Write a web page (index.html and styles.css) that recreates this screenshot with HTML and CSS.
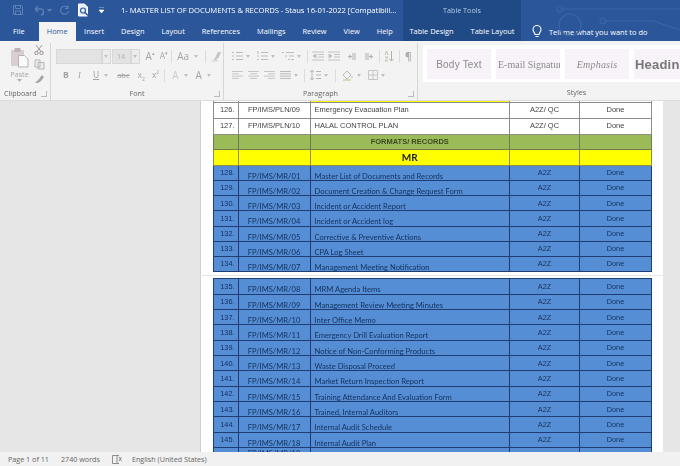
FILE: index.html
```html
<!DOCTYPE html>
<html lang="en">
<head>
<meta charset="utf-8">
<title>Word</title>
<link rel="stylesheet" href="styles.css">
</head>
<body>
<div class="app">
  <header class="titlebar">
    <svg class="decor" width="277" height="41" viewBox="0 0 277 41"><g fill="none" stroke="#3a65a5" stroke-width="1.2"><path d="M157 9H277M200 21H250L277 30"/><circle cx="157" cy="9" r="3"/><circle cx="200" cy="21" r="3"/><circle cx="167" cy="25" r="11"/></g></svg>
    <div class="qat">
      <svg class="q-save" width="12" height="12" viewBox="0 0 12 12"><path d="M1.500 1.500h8l1 1v8h-9zM3.500 1.500v3h5v-3M3.500 10.500v-3.500h5v3.500" fill="none" stroke="#5d80b5"/></svg>
      <svg class="q-undo" width="12" height="12" viewBox="0 0 12 12"><path d="M2 5h5a3 3 0 0 1 1 6M2 5l3-3M2 5l3 3" fill="none" stroke="#5d80b5" stroke-width="1.300"/></svg>
      <svg class="q-caret" width="5" height="3" viewBox="0 0 5 3"><path d="M0 0h5L2.500 3z" fill="#5d80b5"/></svg>
      <svg class="q-redo" width="11" height="11" viewBox="0 0 11 11"><path d="M8.500 2.500A4 4 0 1 0 9.500 6M9 .5v3H6" fill="none" stroke="#5d80b5" stroke-width="1.200"/></svg>
      <svg class="q-prev" width="13" height="14" viewBox="0 0 13 14"><path d="M1.500 1h6l3 3v9h-9z" fill="#e8eef7" stroke="#fff"/><circle cx="6" cy="7.500" r="2.500" fill="none" stroke="#2b579a" stroke-width="1.200"/><path d="M8 9.500l3 3" stroke="#2b579a" stroke-width="1.500"/></svg>
      <svg class="q-more" width="5" height="6" viewBox="0 0 5 6"><path d="M0 0h5M0 3h5L2.500 6z" fill="#fff" stroke="#fff" stroke-width=".6"/></svg>
    </div>
    <div class="doc-title">1- MASTER LIST OF DOCUMENTS &amp; RECORDS - Staus 16-01-2022 [Compatibili...</div>
    <div class="tools-title">Table Tools</div>
  </header>

  <nav class="tabs">
    <span class="tab tab-file">File</span>
    <span class="tab tab-active">Home</span>
    <span class="tab">Insert</span>
    <span class="tab">Design</span>
    <span class="tab">Layout</span>
    <span class="tab">References</span>
    <span class="tab">Mailings</span>
    <span class="tab">Review</span>
    <span class="tab">View</span>
    <span class="tab">Help</span>
    <div class="context-tabs">
      <span class="tab">Table Design</span>
      <span class="tab">Table Layout</span>
    </div>
    <div class="tellme">
      <svg width="10" height="13" viewBox="0 0 10 13"><path d="M3 9.500C3 7.500 1 7 1 4.500a4 4 0 0 1 8 0C9 7 7 7.500 7 9.500zM3.500 11.500h3" fill="none" stroke="#fff" stroke-width="1.100"/></svg>
      <span>Tell me what you want to do</span>
    </div>
  </nav>

  <section class="ribbon">
    <div class="group g-clip">
      <div class="group-body clip-body">
        <div class="paste">
          <svg width="19" height="21" viewBox="0 0 19 21"><rect x="1" y="3" width="13" height="16" fill="#d9cfd0"/><rect x="4.500" y="1" width="6" height="4" fill="#bdb4b5"/><path d="M8.500 8.500h6l3.500 3.500v8h-9.500z" fill="#fafafa" stroke="#b5b5b5"/></svg>
          <span class="paste-label">Paste</span>
          <svg width="5" height="3" viewBox="0 0 5 3"><path d="M0 0h5L2.500 3z" fill="#b0b0b0"/></svg>
        </div>
        <div class="clip-tools">
          <svg width="10" height="11" viewBox="0 0 10 11"><path d="M2 1l5 6.500M8 1L3 7.500" stroke="#9a9a9a"/><circle cx="2.500" cy="9" r="1.700" fill="none" stroke="#9a8f8f"/><circle cx="7.500" cy="9" r="1.700" fill="none" stroke="#9a8f8f"/></svg>
          <svg width="11" height="11" viewBox="0 0 11 11"><path d="M1 1h5v7H1zM4 3.500h6V10H4z" fill="#eee" stroke="#b5b5b5"/></svg>
          <svg width="11" height="10" viewBox="0 0 11 10"><path d="M1 9l4-4 2 2-3 2zM5 5l3-4 2 2-3 4z" fill="#a5a5a5"/></svg>
        </div>
      </div>
      <div class="group-label"><span>Clipboard</span><i class="launcher"></i></div>
    </div>

    <div class="group g-font">
      <div class="group-body">
        <div class="row row-top">
          <span class="box box-name"></span><span class="box box-dd"><b class="caret"></b></span>
          <span class="box box-size">14</span><span class="box box-dd"><b class="caret"></b></span>
          <span class="tool t-grow">A<sup>▴</sup></span>
          <span class="tool t-shrink">A<sup>▾</sup></span>
          <i class="sep s-a"></i>
          <span class="tool t-aa">Aa</span><b class="caret"></b>
          <i class="sep s-b"></i>
          <svg class="t-clear" width="12" height="11" viewBox="0 0 12 11"><path d="M3 9L7 1h3L8 6l-3 3z" fill="#cbbfc8"/><path d="M1 10h6" stroke="#ccc"/></svg>
        </div>
        <div class="row row-bottom">
          <span class="fmt f-b">B</span>
          <span class="fmt f-i">I</span>
          <span class="fmt f-u">U</span><b class="caret"></b>
          <span class="fmt f-abc">abc</span>
          <span class="fmt f-x">x<sub>2</sub></span>
          <span class="fmt f-x2">x<sup>2</sup></span>
          <i class="sep s-c"></i>
          <span class="fmt f-fx">A</span><b class="caret"></b>
          <span class="fmt f-col">A</span><b class="caret"></b>
        </div>
      </div>
      <div class="group-label"><span>Font</span><i class="launcher"></i></div>
    </div>

    <div class="group g-para">
      <div class="group-body">
        <div class="row row-top para-top">
          <svg width="11" height="10" viewBox="0 0 11 10"><path d="M0 1.500h2M4 1.500h7M0 5h2M4 5h7M0 8.500h2M4 8.500h7" stroke="#bdbdbd"/></svg><b class="caret"></b>
          <svg class="p-num" width="11" height="10" viewBox="0 0 11 10"><path d="M1 0v3M0 5h2M0 8.500h2M4 1.500h7M4 5h7M4 8.500h7" stroke="#bdbdbd"/></svg><b class="caret"></b>
          <svg class="p-multi" width="12" height="10" viewBox="0 0 12 10"><path d="M0 1.500h2M4 1.500h8M3 5h2M7 5h5M6 8.500h2M9 8.500h3" stroke="#bdbdbd"/></svg><b class="caret"></b>
          <i class="sep s-d"></i>
          <svg class="p-ind" width="12" height="10" viewBox="0 0 12 10"><path d="M0 1h12M6 3.500h6M6 6h6M0 9h12M4 3L1 5l3 2z" stroke="#bdbdbd" fill="#bdbdbd" stroke-width=".9"/></svg>
          <svg class="p-ind2" width="12" height="10" viewBox="0 0 12 10"><path d="M0 1h12M6 3.500h6M6 6h6M0 9h12M1 3l3 2-3 2z" stroke="#bdbdbd" fill="#bdbdbd" stroke-width=".9"/></svg>
          <svg class="p-ltr" width="8" height="7" viewBox="0 0 8 7"><path d="M0 3.500h4M5 0v7M7 0v7M1 1.500L3.500 3.500 1 5.500" stroke="#b0b0b0" fill="none"/></svg>
          <svg class="p-rtl" width="8" height="7" viewBox="0 0 8 7"><path d="M8 3.500H4M3 0v7M1 0v7M7 1.500L4.500 3.500 7 5.500" stroke="#b0b0b0" fill="none"/></svg>
          <i class="sep s-e"></i>
          <svg class="p-sort" width="10" height="12" viewBox="0 0 10 12"><path d="M7.500 1v10M5.500 9l2 2 2-2" stroke="#b0b0b0" fill="none"/><path d="M1 5L2.500 1 4 5M1 7h3L1 11h3" stroke="#c4bca9" fill="none" stroke-width=".9"/></svg>
          <i class="sep s-f"></i>
          <span class="pilcrow">¶</span>
        </div>
        <div class="row row-bottom para-bottom">
          <svg width="11" height="8" viewBox="0 0 11 8"><path d="M0 .5h11M0 2.800h7M0 5.100h11M0 7.400h7" stroke="#c6c6c6"/></svg>
          <svg class="p-a2" width="11" height="8" viewBox="0 0 11 8"><path d="M0 .5h11M2 2.800h7M0 5.100h11M2 7.400h7" stroke="#c6c6c6"/></svg>
          <svg class="p-a2" width="11" height="8" viewBox="0 0 11 8"><path d="M0 .5h11M4 2.800h7M0 5.100h11M4 7.400h7" stroke="#c6c6c6"/></svg>
          <svg class="p-a2" width="11" height="8" viewBox="0 0 11 8"><path d="M0 .5h11M0 2.800h11M0 5.100h11M0 7.400h11" stroke="#bababa"/></svg><b class="caret"></b>
          <i class="sep s-g"></i>
          <svg class="p-sp" width="11" height="12" viewBox="0 0 11 12"><path d="M2 1v10M0 3l2-2 2 2M0 9l2 2 2-2M6 2.500h5M6 6h5M6 9.500h5" stroke="#b5b5b5" fill="none"/></svg><b class="caret"></b>
          <i class="sep s-h"></i>
          <svg class="p-sh" width="12" height="12" viewBox="0 0 12 12"><path d="M1 6l4-4 4 4-4 4zM10 7v2" fill="none" stroke="#bbb"/><path d="M1 11h8" stroke="#d6cda8" stroke-width="1.500"/></svg><b class="caret"></b>
          <svg class="p-bd" width="10" height="10" viewBox="0 0 10 10"><path d="M.5.500h9v9h-9zM5 .5v9M.5 5h9" fill="none" stroke="#c6c6c6"/></svg><b class="caret"></b>
        </div>
      </div>
      <div class="group-label"><span>Paragraph</span><i class="launcher"></i></div>
    </div>

    <div class="group g-styles">
      <div class="gallery">
        <div class="style st-body">Body Text</div>
        <div class="style st-mail">E-mail Signature</div>
        <div class="style st-emph">Emphasis</div>
        <div class="style st-head">Heading</div>
      </div>
      <div class="group-label styles-label"><span>Styles</span></div>
    </div>
  </section>

  <main class="docarea">
    <div class="page">
      <table class="doc-table plain">
        <colgroup><col class="c1"><col class="c2"><col class="c3"><col class="c4"><col class="c5"></colgroup>
        <tr class="sliver"><td></td><td></td><td class="hl"></td><td></td><td></td></tr>
        <tr class="r-a"><td class="n">126.</td><td class="code">FP/IMS/PLN/09</td><td class="name">Emergency Evacuation Plan</td><td class="mid">A2Z/ QC</td><td class="mid">Done</td></tr>
        <tr class="r-b"><td class="n">127.</td><td class="code">FP/IMS/PLN/10</td><td class="name">HALAL CONTROL PLAN</td><td class="mid">A2Z/ QC</td><td class="mid">Done</td></tr>
        <tr class="green"><td></td><td></td><td class="band">FORMATS/ RECORDS</td><td></td><td></td></tr>
        <tr class="yellow"><td></td><td></td><td class="band2">MR</td><td></td><td></td></tr>
        <tr class="blue"><td class="n">128.</td><td class="code">FP/IMS/MR/01</td><td class="name">Master List of Documents and Records</td><td class="mid">A2Z</td><td class="mid">Done</td></tr>
        <tr class="blue"><td class="n">129.</td><td class="code">FP/IMS/MR/02</td><td class="name">Document Creation &amp; Change Request Form</td><td class="mid">A2Z</td><td class="mid">Done</td></tr>
        <tr class="blue"><td class="n">130.</td><td class="code">FP/IMS/MR/03</td><td class="name">Incident or Accident Report</td><td class="mid">A2Z</td><td class="mid">Done</td></tr>
        <tr class="blue"><td class="n">131.</td><td class="code">FP/IMS/MR/04</td><td class="name">Incident or Accident log</td><td class="mid">A2Z</td><td class="mid">Done</td></tr>
        <tr class="blue"><td class="n">132.</td><td class="code">FP/IMS/MR/05</td><td class="name">Corrective &amp; Preventive Actions</td><td class="mid">A2Z</td><td class="mid">Done</td></tr>
        <tr class="blue"><td class="n">133.</td><td class="code">FP/IMS/MR/06</td><td class="name">CPA Log Sheet</td><td class="mid">A2Z</td><td class="mid">Done</td></tr>
        <tr class="blue"><td class="n">134.</td><td class="code">FP/IMS/MR/07</td><td class="name">Management Meeting Notification</td><td class="mid">A2Z</td><td class="mid">Done</td></tr>
      </table>
    </div>
    <div class="page-gap"></div>
    <div class="page page-two">
      <table class="doc-table">
        <colgroup><col class="c1"><col class="c2"><col class="c3"><col class="c4"><col class="c5"></colgroup>
        <tr class="blue"><td class="n">135.</td><td class="code">FP/IMS/MR/08</td><td class="name">MRM Agenda Items</td><td class="mid">A2Z</td><td class="mid">Done</td></tr>
        <tr class="blue"><td class="n">136.</td><td class="code">FP/IMS/MR/09</td><td class="name">Management Review Meeting Minutes</td><td class="mid">A2Z</td><td class="mid">Done</td></tr>
        <tr class="blue"><td class="n">137.</td><td class="code">FP/IMS/MR/10</td><td class="name">Inter Office Memo</td><td class="mid">A2Z</td><td class="mid">Done</td></tr>
        <tr class="blue"><td class="n">138.</td><td class="code">FP/IMS/MR/11</td><td class="name">Emergency Drill Evaluation Report</td><td class="mid">A2Z</td><td class="mid">Done</td></tr>
        <tr class="blue"><td class="n">139.</td><td class="code">FP/IMS/MR/12</td><td class="name">Notice of Non-Conforming Products</td><td class="mid">A2Z</td><td class="mid">Done</td></tr>
        <tr class="blue"><td class="n">140.</td><td class="code">FP/IMS/MR/13</td><td class="name">Waste Disposal Proceed</td><td class="mid">A2Z</td><td class="mid">Done</td></tr>
        <tr class="blue"><td class="n">141.</td><td class="code">FP/IMS/MR/14</td><td class="name">Market Return Inspection Report</td><td class="mid">A2Z</td><td class="mid">Done</td></tr>
        <tr class="blue"><td class="n">142.</td><td class="code">FP/IMS/MR/15</td><td class="name">Training Attendance <u class="squig">And</u> Evaluation Form</td><td class="mid">A2Z</td><td class="mid">Done</td></tr>
        <tr class="blue"><td class="n">143.</td><td class="code">FP/IMS/MR/16</td><td class="name"><u class="squig">Trained, Internal</u> Auditors</td><td class="mid">A2Z</td><td class="mid">Done</td></tr>
        <tr class="blue"><td class="n">144.</td><td class="code">FP/IMS/MR/17</td><td class="name">Internal Audit Schedule</td><td class="mid">A2Z</td><td class="mid">Done</td></tr>
        <tr class="blue"><td class="n">145.</td><td class="code">FP/IMS/MR/18</td><td class="name">Internal Audit Plan</td><td class="mid">A2Z</td><td class="mid">Done</td></tr>
        <tr class="blue last"><td class="n"></td><td class="code">FP/IMS/MR/19</td><td class="name"><span class="mark-bar"></span></td><td class="mid"></td><td class="mid"></td></tr>
      </table>
    </div>
  </main>

  <footer class="statusbar">
    <span class="sb-page">Page 1 of 11</span>
    <span class="sb-words">2740 words</span>
    <svg class="sb-icon" width="10" height="9" viewBox="0 0 10 9"><path d="M.5.500h4.500v8H.5zM5 .5h2M5 8.500h2M7 2l2.500 4M9.500 2L7 6" fill="none" stroke="#777" stroke-width=".8"/></svg>
    <span class="sb-lang">English (United States)</span>
  </footer>
</div>
</body>
</html>
```

FILE: styles.css
```css
* { box-sizing: border-box; }
html, body { margin: 0; padding: 0; height: 100%; }
body { font-family: "Open Sans", "Liberation Sans", sans-serif; background: #e6e6e6; overflow: hidden; }
.app { width: 680px; height: 466px; display: flex; flex-direction: column; overflow: hidden; position: relative; filter: blur(.35px); }

/* title bar */
.titlebar { height: 20px; background: #2b579a; display: flex; align-items: center; color: #fff; flex: none; }
.decor { position: absolute; top: 0; left: 403px; z-index: 2; pointer-events: none; }
.qat { display: flex; align-items: center; width: 121px; flex: none; padding-left: 12px; }
.q-undo { margin-left: 9px; }
.q-caret { margin-left: 2px; }
.q-redo { margin-left: 7px; }
.q-prev { margin-left: 7px; }
.q-more { margin-left: 9px; }
.doc-title { width: 282px; font-size: 7.700px; white-space: nowrap; letter-spacing: -.06px; flex: none; }
.tools-title { width: 118px; height: 20px; background: #1f4a86; font-size: 7.200px; line-height: 20px; text-align: center; color: #b9cae3; flex: none; }

/* tabs */
.tabs { height: 21px; background: #2b579a; display: flex; align-items: flex-end; color: #fff; flex: none; font-size: 7.400px; position: relative; padding-left: 4px; }
.tab { height: 19px; line-height: 18px; padding: 0 8.500px; white-space: nowrap; }
.tab-file { padding-left: 9px; padding-right: 14px; }
.tab-active { background: #f3f3f3; color: #2b579a; padding: 0 8px; }
.context-tabs { position: absolute; left: 403px; top: 0; width: 118px; height: 21px; background: #1f4a86; display: flex; align-items: flex-end; justify-content: center; }
.tellme { position: absolute; left: 532px; top: 0; height: 21px; display: flex; align-items: center; gap: 7px; padding-top: 2px; letter-spacing: .05px; }

/* ribbon */
.ribbon { height: 60px; background: #f3f3f3; display: flex; flex: none; color: #9a9a9a; border-bottom: 1px solid #dcdcdc; }
.group { position: relative; display: flex; flex-direction: column; flex: none; border-right: 1px solid #d6d6d6; margin: 2px 0 0; }
.g-clip { width: 51px; }
.g-font { width: 173px; }
.g-para { width: 194px; }
.g-styles { flex: 1; border-right: 0; }
.group-body { height: 43px; flex: none; }
.group-label { height: 14px; font-size: 7.200px; line-height: 14px; text-align: center; color: #666; position: relative; flex: none; }
.launcher { position: absolute; right: 3px; top: 5px; width: 6px; height: 6px; border-right: 1px solid #bcbcbc; border-bottom: 1px solid #bcbcbc; }
.g-clip .group-label { text-align: left; padding-left: 4px; }
.styles-label { padding-left: 33px; }

.clip-body { display: flex; padding: 4px 0 0 10px; }
.paste { display: flex; flex-direction: column; align-items: center; width: 19px; }
.paste-label { font-size: 7.200px; line-height: 10px; margin-top: 1px; color: #a5a5a5; }
.clip-tools { display: flex; flex-direction: column; gap: 4px; margin-left: 5px; margin-top: -3px; }

.row { display: flex; align-items: center; }
.row-top { height: 16px; margin-top: 5px; padding-left: 5px; }
.row-bottom { height: 16px; margin-top: 3px; padding-left: 12px; }
.box { height: 15px; background: #e3e3e3; border: 1px solid #d8d8d8; font-size: 7.200px; line-height: 13px; text-align: center; color: #b0b0b0; display: flex; align-items: center; justify-content: center; }
.box-name { width: 46px; }
.box-dd { width: 9px; background: #ececec; margin-right: 1px; }
.box-size { width: 19px; }
.caret { display: inline-block; flex: none; width: 0; height: 0; border: 2.500px solid transparent; border-top: 3px solid #c0c0c0; border-bottom: 0; }
.row-bottom .caret, .row-top > .caret { margin-left: 5px; }
.tool { font-size: 10px; color: #a5a5a5; line-height: 12px; white-space: nowrap; }
.tool sup { font-size: 5px; vertical-align: top; line-height: 7px; }
.t-grow { margin-left: 5px; }
.t-shrink { margin-left: 5px; font-size: 8.500px; }
.t-aa { margin-left: 5px; }
.sep { display: block; width: 1px; height: 13px; background: #dcdcdc; flex: none; }
.s-a { margin-left: 3px; }
.s-b { margin-left: 7px; }
.t-clear { margin-left: 5px; }
.fmt { font-size: 8.500px; color: #a3a3a3; line-height: 12px; white-space: nowrap; }
.fmt sub, .fmt sup { font-size: 5px; line-height: 0; }
.f-b { font-weight: 700; width: 6px; }
.f-i { font-style: italic; margin-left: 9px; width: 4px; font-family: "Liberation Serif", serif; }
.f-u { text-decoration: underline; margin-left: 11px; }
.f-abc { margin-left: 9px; font-size: 7.500px; text-decoration: line-through; text-decoration-thickness: .5px; }
.f-x { margin-left: 8px; }
.f-x2 { margin-left: 7px; }
.s-c { margin-left: 5px; }
.f-fx { margin-left: 7px; font-size: 10px; color: #cacaca; }
.f-col { margin-left: 8px; font-size: 10px; }

.para-top { padding-left: 8px; }
.para-bottom { padding-left: 8px; }
.para-top .caret, .para-bottom .caret { margin-left: 3px; }
.p-num { margin-left: 7px; }
.p-multi { margin-left: 7px; }
.s-d { margin-left: 6px; }
.p-ind { margin-left: 4px; }
.p-ind2 { margin-left: 4px; }
.p-ltr { margin-left: 8px; }
.p-rtl { margin-left: 9px; }
.s-e { margin-left: 6px; }
.p-sort { margin-left: 4px; }
.s-f { margin-left: 5px; }
.pilcrow { margin-left: 5px; font-size: 10px; font-weight: 700; color: #adadad; line-height: 12px; }
.p-a2 { margin-left: 5px; }
.s-g { margin-left: 6px; }
.p-sp { margin-left: 5px; }
.s-h { margin-left: 7px; }
.p-sh { margin-left: 6px; }
.p-bd { margin-left: 7px; }

.gallery { height: 37px; flex: none; background: #fff; margin: 2px 0 3px 5px; display: flex; padding: 4px 4px 3px; gap: 5px; overflow: hidden; }
.style { flex: none; width: 64px; background: #f8f3f9; color: #8a8a8a; display: flex; align-items: center; justify-content: center; white-space: nowrap; overflow: hidden; }
.st-body { font-family: "Liberation Sans", sans-serif; font-size: 10px; letter-spacing: .2px; }
.st-mail { font-family: "Liberation Serif", serif; font-size: 10px; justify-content: flex-start; padding-left: 2px; }
.st-emph { font-family: "Liberation Serif", serif; font-style: italic; font-size: 10px; letter-spacing: .2px; }
.st-head { font-family: "Liberation Sans", sans-serif; font-weight: 700; font-size: 13px; color: #777; justify-content: flex-start; padding-left: 1px; letter-spacing: .2px; }

/* document */
.docarea { flex: 1; min-height: 0; overflow: hidden; background: #e6e6e6; padding-left: 201px; padding-right: 17px; }
.page { background: #fff; padding: 0 12px 3.300px; box-shadow: -1px 0 0 #cfcfcf; }
.page-gap { height: 1px; background: #e6e6e6; }
.page-two { padding-top: 2px; padding-bottom: 0; height: 200px; }
.doc-table { width: 438px; table-layout: fixed; border-collapse: collapse; font-family: "Liberation Sans", sans-serif; font-size: 7.500px; color: #444; }
.c1 { width: 24.500px; }
.c2 { width: 72px; }
.c3 { width: 199.500px; }
.c4 { width: 70px; }
.c5 { width: 72px; }
.doc-table tr { height: 15.350px; }
.doc-table tr.r-a { height: 16.500px; }
.doc-table tr.r-b { height: 15.800px; }
.doc-table tr.green { height: 15.400px; }
.doc-table tr.yellow { height: 15.600px; }
.plain .blue { height: 15.200px; }
.doc-table td { border: 1px solid #8c8c8c; padding: 0; line-height: 8px; white-space: nowrap; overflow: hidden; text-align: center; vertical-align: middle; }
.doc-table tr.sliver { height: 1px; }
.doc-table tr.sliver td { border-top: 0; border-bottom: 0; line-height: 0; font-size: 0; }
.hl { background: #ffff00; }
.doc-table .n { text-align: right; padding-right: 3px; }
.doc-table .name { text-align: left; padding-left: 4px; }
.green td { background: #9bbb59; border-color: #6e7d50; }
.band { font-weight: 700; color: #3b4a22; }
.yellow td { background: #ffff00; border-color: #8f8f4a; }
.band2 { font-weight: 700; font-size: 10px; color: #222; font-family: "Lato", sans-serif; }
.blue td { background: #558ed5; border-color: #1f3d73; color: #14305c; font-family: "Lato", sans-serif; font-size: 7.600px; vertical-align: top; padding-top: 3.500px; }
.doc-table .blue .code, .doc-table .blue .name { padding-top: 6px; }
.doc-table .last .code { padding-top: 1px; }
.doc-table .last .name { padding-top: 3.500px; }
.blue .n, .blue .mid { font-family: "Liberation Sans", sans-serif; font-size: 7.300px; }
.squig { text-decoration: underline wavy #1d2f80; text-decoration-thickness: .5px; }
.mark-bar { display: block; width: 127px; height: 6px; background: #f5e967; }

/* status bar */
.statusbar { height: 14px; background: #f1f1f1; flex: none; display: flex; align-items: center; font-size: 7.200px; color: #666; padding-left: 8px; position: relative; z-index: 3; }
.sb-words { margin-left: 12px; }
.sb-icon { margin-left: 12px; }
.sb-lang { margin-left: 10px; }
```
